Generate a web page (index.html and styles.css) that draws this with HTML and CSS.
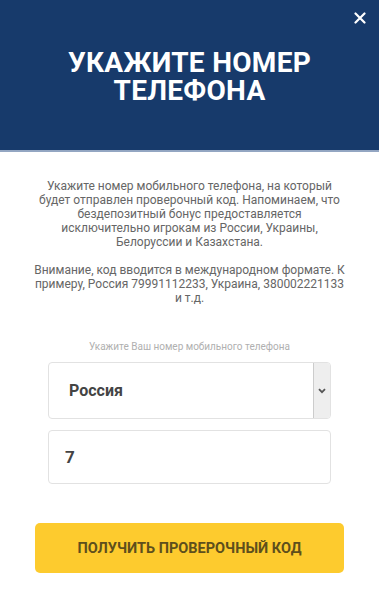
FILE: index.html
```html
<!DOCTYPE html>
<html lang="ru">
<head>
<meta charset="utf-8">
<link rel="stylesheet" href="styles.css">
</head>
<body>
<div class="modal">
  <header class="head">
    <button class="close" aria-label="Закрыть">
      <svg width="12" height="12" viewBox="0 0 12 12"><path d="M1.5 1.5 L10.5 10.5 M10.5 1.5 L1.5 10.5" stroke="#fff" stroke-width="2.2" stroke-linecap="round"/></svg>
    </button>
    <h1 class="title">УКАЖИТЕ НОМЕР<br>ТЕЛЕФОНА</h1>
  </header>
  <main class="body">
    <p class="text">Укажите номер мобильного телефона, на который будет отправлен проверочный код. Напоминаем, что бездепозитный бонус предоставляется исключительно игрокам из России, Украины, Белоруссии и Казахстана.</p>
    <p class="text">Внимание, код вводится в международном формате. К примеру, Россия 79991112233, Украина, 380002221133 и т.д.</p>
    <div class="label">Укажите Ваш номер мобильного телефона</div>
    <div class="select">
      <span class="select-value">Россия</span>
      <span class="select-arrow">
        <svg width="8" height="6" viewBox="0 0 8 6"><path d="M1 1.2 L4 4.2 L7 1.2" fill="none" stroke="#555" stroke-width="1.8"/></svg>
      </span>
    </div>
    <div class="input">7</div>
    <button class="submit">ПОЛУЧИТЬ ПРОВЕРОЧНЫЙ КОД</button>
  </main>
</div>
</body>
</html>
```
FILE: styles.css
```css
html, body {
  margin: 0;
  padding: 0;
  background: #fff;
}
.modal {
  width: 379px;
  height: 600px;
  font-family: Roboto, "Noto Sans", sans-serif;
  background: #fff;
  border-radius: 0 0 8px 8px;
  overflow: hidden;
}
.head {
  position: relative;
  box-sizing: border-box;
  height: 152px;
  padding-top: 4px;
  background: #173a6b;
  border-bottom: 2px solid #93a6c2;
  display: flex;
  align-items: center;
  justify-content: center;
}
.close {
  position: absolute;
  top: 12px;
  right: 13px;
  width: 12px;
  height: 12px;
  padding: 0;
  border: 0;
  background: none;
  display: flex;
}
.title {
  margin: 0;
  color: #fff;
  font-size: 28px;
  line-height: 28px;
  font-weight: 700;
  text-align: center;
  letter-spacing: 0.3px;
}
.body {
  padding: 27px 20px 0;
  display: flex;
  flex-direction: column;
  align-items: center;
}
.text {
  margin: 0 0 14px;
  width: 312px;
  color: #666;
  font-size: 12px;
  line-height: 14px;
  text-align: center;
}
.label {
  margin-top: 22px;
  color: #b0b0b0;
  font-size: 10px;
  line-height: 12px;
}
.select, .input {
  width: 283px;
  box-sizing: border-box;
  border: 1px solid #e2e2e2;
  border-radius: 4px;
  background: #fff;
}
.select {
  margin-top: 9px;
  height: 57px;
  display: flex;
  overflow: hidden;
}
.select-value {
  flex: 1;
  display: flex;
  align-items: center;
  padding-left: 20px;
  font-size: 16px;
  font-weight: 700;
  color: #444;
}
.select-arrow {
  width: 16px;
  background: #eee;
  border-left: 1px solid #ccc;
  display: flex;
  align-items: center;
  justify-content: center;
}
.input {
  margin-top: 11px;
  height: 54px;
  display: flex;
  align-items: center;
  padding-left: 16px;
  font-size: 17px;
  font-weight: 700;
  color: #444;
}
.submit {
  margin-top: 39px;
  width: 309px;
  height: 50px;
  border: 0;
  border-radius: 5px;
  background: #fdcb2e;
  color: #5e4f1c;
  font-family: Roboto, "Noto Sans", sans-serif;
  font-size: 14.5px;
  font-weight: 700;
}
```
